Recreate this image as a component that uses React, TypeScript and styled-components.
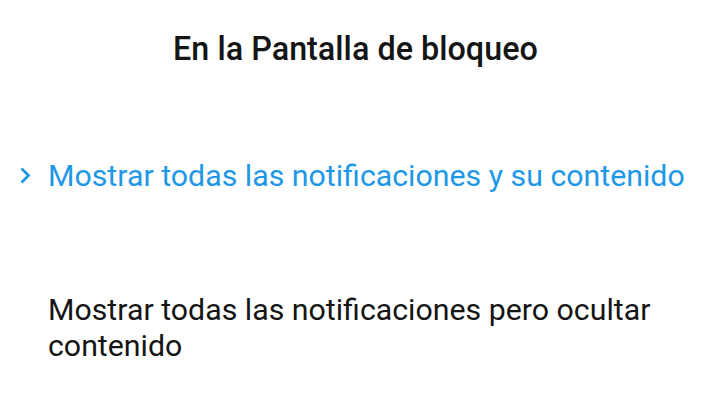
import React from 'react';
import styled, { createGlobalStyle } from 'styled-components';

const GlobalStyle = createGlobalStyle`
  html, body {
    margin: 0;
    padding: 0;
    background: #ffffff;
  }
  body {
    font-family: Roboto, "Noto Sans", sans-serif;
  }
`;

const options = [
  { id: 'all', label: 'Mostrar todas las notificaciones y su contenido', selected: true },
  { id: 'hide', label: 'Mostrar todas las notificaciones pero ocultar contenido', selected: false },
];

export default function App() {
  return (
    <>
      <GlobalStyle />
      <Screen>
        <Title>En la Pantalla de bloqueo</Title>
        <OptionList>
          {options.map((option) => (
            <Option key={option.id} selected={option.selected}>
              <Marker>
                {option.selected && (
                  <svg width="12" height="18" viewBox="0 0 12 18">
                    <path d="M2.5 1.5 L9.5 8.5 L2.5 15.5" fill="none" stroke="#1e98e6" strokeWidth="2.8" />
                  </svg>
                )}
              </Marker>
              <Label>{option.label}</Label>
            </Option>
          ))}
        </OptionList>
      </Screen>
    </>
  );
}

const Screen = styled.div`
  width: 711px;
  height: 400px;
  overflow: hidden;
  background: #ffffff;
`;

const Title = styled.div`
  padding-top: 30px;
  text-align: center;
  font-family: "Roboto Medium", Roboto, "Noto Sans", sans-serif;
  font-size: 32.3px;
  font-weight: 500;
  line-height: 38px;
  color: #151515;
`;

const OptionList = styled.div`
  display: flex;
  flex-direction: column;
  gap: 98px;
  padding-top: 90px;
`;

const Option = styled.div<{ selected: boolean }>`
  display: flex;
  align-items: flex-start;
  padding-right: 16px;
  color: ${({ selected }) => (selected ? '#1e98e6' : '#151515')};
`;

const Marker = styled.div`
  width: 48px;
  flex: none;
  display: flex;
  justify-content: flex-end;
  padding-right: 17px;
  padding-top: 9px;
  box-sizing: border-box;
`;

const Label = styled.div`
  font-size: 30.3px;
  line-height: 36px;
`;
